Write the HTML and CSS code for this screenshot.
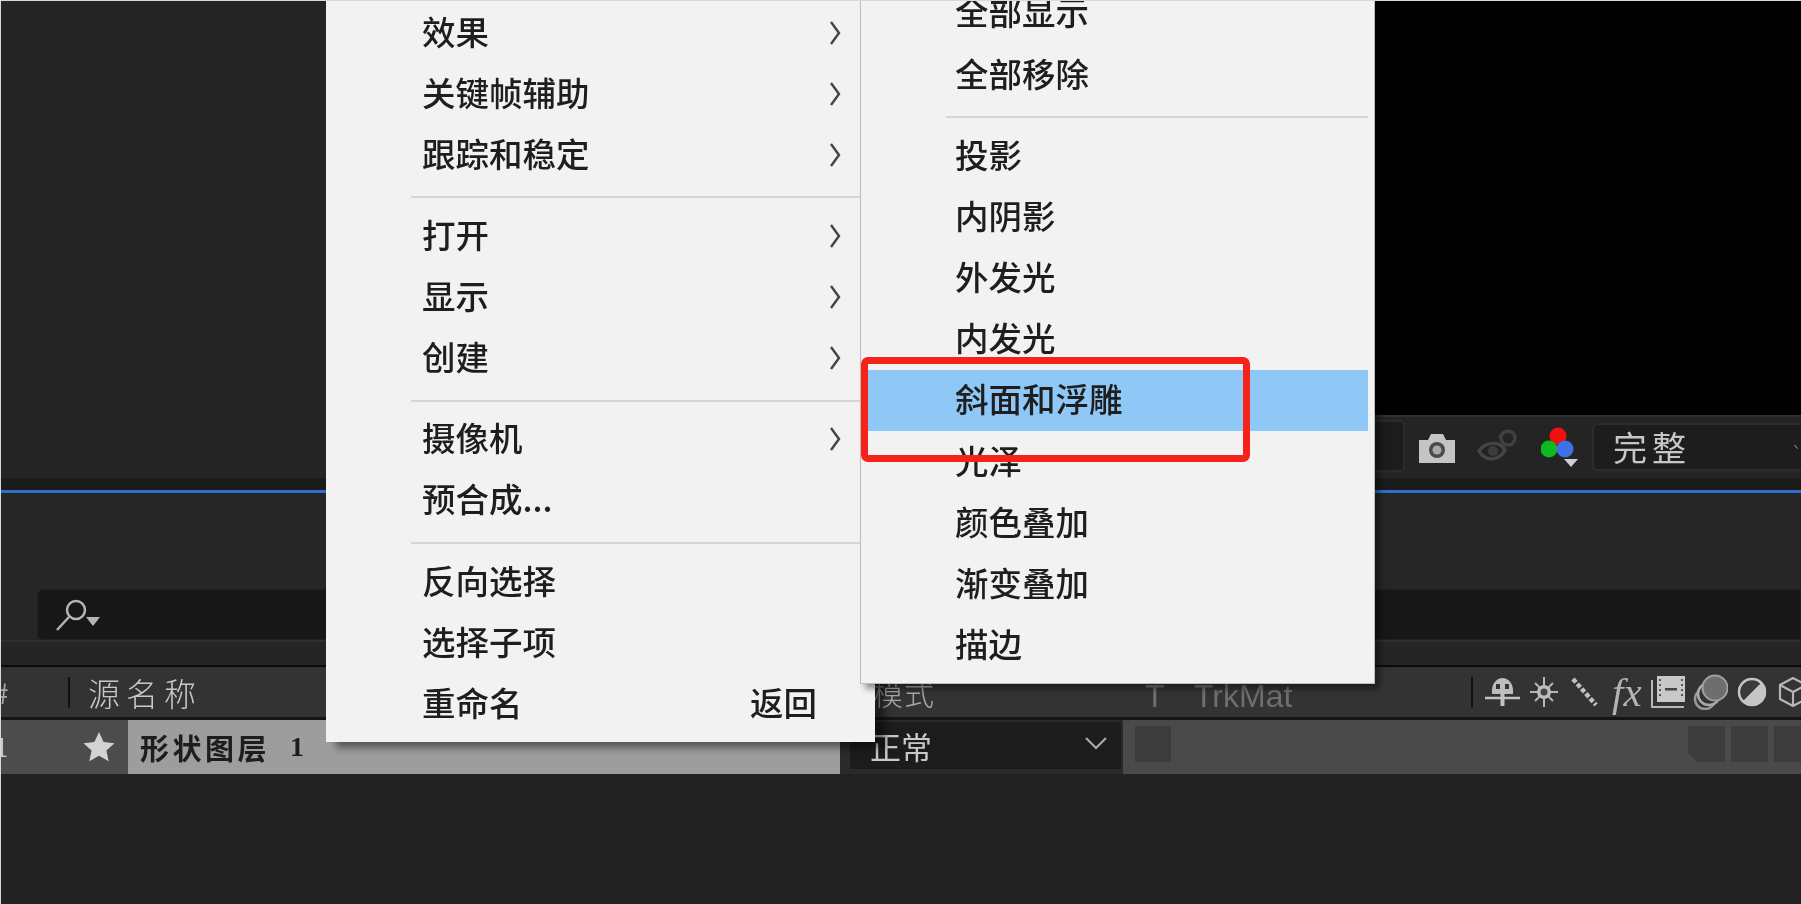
FILE: index.html
```html
<!DOCTYPE html>
<html lang="zh-CN">
<head>
<meta charset="utf-8">
<title>图层样式菜单</title>
<link rel="stylesheet" href="styles.css">
</head>
<body>
<div class="app">
  <section class="preview"><div class="preview-side"></div><div class="preview-black"></div></section>

  <section class="toolbar">
    <div class="tool-left"></div>
    <div class="tool-right">
      <div class="tool-input"></div>
      <svg class="ico cam" viewBox="0 0 40 32"><path d="M2 8h9l3-6h12l3 6h9v23H2z" fill="#c4c4c4"/><circle cx="20" cy="18" r="8" fill="#4a4a4a"/><circle cx="20" cy="18" r="4.5" fill="#a8a8a8"/></svg>
      <svg class="ico eye" viewBox="0 0 42 34"><path d="M2 22c6-9 20-11 26-1-6 11-20 12-26 1z" fill="none" stroke="#454545" stroke-width="3.5"/><circle cx="16" cy="22" r="5" fill="#3d3d3d"/><circle cx="31" cy="9" r="7" fill="none" stroke="#404040" stroke-width="3.5"/><path d="M22 9l4-5" stroke="#404040" stroke-width="3"/></svg>
      <svg class="ico rgb" viewBox="0 0 40 40"><circle cx="17" cy="9" r="8.5" fill="#f01010"/><circle cx="8" cy="22" r="8.5" fill="#10b820"/><circle cx="24" cy="22" r="8.5" fill="#3f70ea"/><path d="M23 32h14l-7 8z" fill="#cfcfcf"/></svg>
      <div class="tool-select"><span class="tool-label">完整</span><svg class="tool-chev" viewBox="0 0 14 10"><path d="M1 1l6 7" fill="none" stroke="#aaa" stroke-width="2"/></svg></div>
    </div>
  </section>
  <div class="band"></div>
  <div class="blue"></div>
  <div class="panel-gap"></div>
  <section class="search-row">
    <div class="search-box">
      <svg class="search-ico" viewBox="0 0 50 34"><circle cx="22" cy="11" r="9" fill="none" stroke="#b5b5b5" stroke-width="2.5"/><path d="M15 18L3 31" stroke="#b5b5b5" stroke-width="2.5"/><path d="M32 18h14l-7 9z" fill="#b5b5b5"/></svg>
    </div>
  </section>
  <div class="panel-low"></div>
  <div class="black-line"></div>

  <section class="layer-head">
    <span class="col-hash">#</span>
    <span class="col-div"><i class="vline"></i></span>
    <span class="col-name">源名称</span>
    <span class="col-mode">模式</span>
    <span class="col-t">T</span>
    <span class="col-trk">TrkMat</span>
    <span class="col-div2"><i class="vline"></i></span>
    <div class="switches">
      <svg class="sw s-shy" viewBox="0 0 35 30"><path d="M7 17C6 6 12 1 17.5 1S29 6 28 17z" fill="#bdbdbd"/><rect x="11" y="7" width="4" height="5" fill="#333"/><rect x="20" y="7" width="4" height="5" fill="#333"/><path d="M0 21h35" stroke="#c2c2c2" stroke-width="2.5"/><path d="M17.5 14v15" stroke="#c2c2c2" stroke-width="4"/></svg>
      <svg class="sw s-sun" viewBox="0 0 28 30"><path d="M14 0v30M0 15h28M5 6l18 18M23 6L5 24" stroke="#b5b5b5" stroke-width="2"/><circle cx="14" cy="15" r="7" fill="#bdbdbd"/><circle cx="14" cy="15" r="3.5" fill="#444"/></svg>
      <svg class="sw s-line" viewBox="0 0 28 30"><path d="M3 2L26 28" stroke="#c0c0c0" stroke-width="4.5" stroke-dasharray="4.5 2"/></svg>
      <span class="s-fx">fx</span>
      <svg class="sw s-film" viewBox="0 0 34 32"><path d="M1 4v27h32" fill="none" stroke="#b8b8b8" stroke-width="2"/><rect x="6" y="0" width="28" height="26" fill="#c8c8c8"/><path d="M9 3v20M31 3v20" stroke="#555" stroke-width="2" stroke-dasharray="2 3"/><rect x="14" y="12" width="12" height="2.5" fill="#444"/></svg>
      <svg class="sw s-mb" viewBox="0 0 35 36"><circle cx="12" cy="25" r="10" fill="none" stroke="#999" stroke-width="2.5"/><circle cx="16" cy="20" r="11" fill="#333" stroke="#aaa" stroke-width="2.5"/><circle cx="22" cy="14" r="12.5" fill="#6e6e6e" stroke="#a0a0a0" stroke-width="2"/></svg>
      <svg class="sw s-half" viewBox="0 0 30 30"><circle cx="15" cy="15" r="14" fill="#c5c5c5"/><path d="M5 25A14 14 0 0 1 25 5z" fill="#3a3a3a"/><circle cx="15" cy="15" r="13" fill="none" stroke="#c5c5c5" stroke-width="2.5"/></svg>
      <svg class="sw s-cube" viewBox="0 0 30 30"><path d="M15 1l13 7v14l-13 7-13-7V8zM2 8l13 7 13-7M15 15v14" fill="none" stroke="#b5b5b5" stroke-width="2.2"/></svg>
    </div>
  </section>
  <div class="dark-line"></div>

  <section class="layer-row">
    <div class="row-idx"><span class="idx">1</span><svg class="star" viewBox="0 0 32 32"><path d="M16 1l4.6 10 10.9 1.2-8.1 7.3 2.3 10.7L16 24.7 6.3 30.2l2.3-10.7L.5 12.2 11.4 11z" fill="#d2d2d2"/></svg></div>
    <div class="row-name">形状图层<span class="row-num">1</span></div>
    <div class="row-gap"></div>
    <div class="row-mode"><span>正常</span><svg class="mode-chev" viewBox="0 0 24 14"><path d="M2 2l10 10L22 2" fill="none" stroke="#aaa" stroke-width="2.2"/></svg></div>
    <div class="row-rest">
      <i class="cell cell-first"></i>
      <i class="cell cell-a"></i>
      <i class="cell"></i>
      <i class="cell cell-end"></i>
    </div>
  </section>
  <div class="bottom"></div>

  <nav class="menu menu-main">
    <div class="mi"><span class="mt">效果</span><svg class="chev" viewBox="0 0 12 24"><path d="M2 1l8 11L2 23" fill="none" stroke="#444" stroke-width="2.4"/></svg></div>
    <div class="mi"><span class="mt">关键帧辅助</span><svg class="chev" viewBox="0 0 12 24"><path d="M2 1l8 11L2 23" fill="none" stroke="#444" stroke-width="2.4"/></svg></div>
    <div class="mi"><span class="mt">跟踪和稳定</span><svg class="chev" viewBox="0 0 12 24"><path d="M2 1l8 11L2 23" fill="none" stroke="#444" stroke-width="2.4"/></svg></div>
    <div class="sep"></div>
    <div class="mi"><span class="mt">打开</span><svg class="chev" viewBox="0 0 12 24"><path d="M2 1l8 11L2 23" fill="none" stroke="#444" stroke-width="2.4"/></svg></div>
    <div class="mi"><span class="mt">显示</span><svg class="chev" viewBox="0 0 12 24"><path d="M2 1l8 11L2 23" fill="none" stroke="#444" stroke-width="2.4"/></svg></div>
    <div class="mi"><span class="mt">创建</span><svg class="chev" viewBox="0 0 12 24"><path d="M2 1l8 11L2 23" fill="none" stroke="#444" stroke-width="2.4"/></svg></div>
    <div class="sep"></div>
    <div class="mi"><span class="mt">摄像机</span><svg class="chev" viewBox="0 0 12 24"><path d="M2 1l8 11L2 23" fill="none" stroke="#444" stroke-width="2.4"/></svg></div>
    <div class="mi"><span class="mt">预合成...</span></div>
    <div class="sep"></div>
    <div class="mi"><span class="mt">反向选择</span></div>
    <div class="mi"><span class="mt">选择子项</span></div>
    <div class="mi"><span class="mt">重命名</span><span class="mt shortcut">返回</span></div>
  </nav>

  <nav class="menu menu-sub">
    <div class="si">全部显示</div>
    <div class="si">全部移除</div>
    <div class="sep sep-sub"></div>
    <div class="si">投影</div>
    <div class="si">内阴影</div>
    <div class="si">外发光</div>
    <div class="si">内发光</div>
    <div class="si si-on">斜面和浮雕</div>
    <div class="si">光泽</div>
    <div class="si">颜色叠加</div>
    <div class="si">渐变叠加</div>
    <div class="si">描边</div>
  </nav>

  <div class="redbox"></div>
</div>
</body>
</html>
```
FILE: styles.css
```css
* { box-sizing: border-box; }
html, body { margin: 0; padding: 0; height: 100%; background: #232323; overflow: hidden; }
body { font-family: "Noto Sans CJK SC", "Noto Sans", sans-serif; }

.app {
  position: relative;
  width: 1801px;
  height: 904px;
  overflow: hidden;
  display: flex;
  flex-direction: column;
  background: #232323;
  border-left: 1px solid #d8d8d8;
  border-top: 1px solid #d8d8d8;
  filter: blur(0.6px);
}

/* preview */
.preview { display: flex; height: 414px; flex: none; }
.preview-side { width: 1374px; background: #252525; }
.preview-black { flex: 1; background: #000; }

/* viewer toolbar */
.toolbar { height: 63px; flex: none; display: flex; background: #252525; }
.tool-left { width: 1374px; flex: none; }
.tool-right {
  flex: 1;
  display: flex;
  align-items: flex-start;
  background: #242424;
  border-top: 2px solid #2f2f2f;
}
.tool-input { width: 30px; height: 52px; margin-top: 3px; background: #1c1c1c; border: 2px solid #2b2b2b; border-left: 0; border-radius: 0 5px 5px 0; }
.ico { display: block; flex: none; }
.cam { width: 40px; height: 32px; margin: 15px 0 0 12px; }
.eye { width: 42px; height: 34px; margin: 12px 0 0 20px; }
.rgb { width: 40px; height: 40px; margin: 10px 0 0 22px; }
.tool-select {
  flex: 1;
  height: 48px;
  margin: 6px 0 0 11px;
  padding-left: 19px;
  display: flex;
  align-items: center;
  justify-content: space-between;
  background: #1d1d1d;
  border: 2px solid #2c2c2c;
  border-right: 0;
  border-radius: 6px 0 0 6px;
}
.tool-label { font-size: 34px; line-height: 44px; letter-spacing: 5px; color: #c6c6c6; font-weight: 400; }
.tool-chev { width: 7px; height: 10px; }

.band { height: 12px; flex: none; background: #1b1b1b; }
.blue { height: 3px; flex: none; background: #2b70c9; }
.panel-gap { height: 96px; flex: none; background: #262626; }

.search-row { height: 51px; flex: none; padding-left: 36px; background: #262626; }
.search-box { height: 51px; padding: 9px 0 0 16px; background: #171717; border-radius: 6px 0 0 6px; border: 1px solid #202020; }
.search-ico { display: block; width: 50px; height: 34px; }

.panel-low { height: 25px; flex: none; background: #252525; border-top: 2px solid #2f2f2f; }
.black-line { height: 2px; flex: none; background: #0b0b0b; }

/* layer header */
.layer-head {
  height: 50px;
  flex: none;
  display: grid;
  grid-template-columns: 67px 20px 785px 272px 49px 277px 14px 1fr;
  align-items: center;
  background: #333;
  color: #bdbdbd;
  overflow: hidden;
}
.col-hash { margin-left: -8px; font-size: 28px; color: #a8a8a8; }
.col-div, .col-div2 { display: flex; align-items: center; height: 100%; }
.vline { display: block; width: 2px; height: 31px; background: #111; }
.col-name { font-size: 32px; letter-spacing: 6px; line-height: 40px; font-weight: 300; color: #c8c8c8; }
.col-mode { font-size: 30px; letter-spacing: 1px; line-height: 40px; font-weight: 300; color: #a8a8a8; }
.col-t, .col-trk { font-family: "Liberation Sans", sans-serif; font-size: 32px; color: #6e6e6e; margin-top: 8px; }
.switches { display: flex; align-items: center; height: 100%; }
.sw { display: block; flex: none; }
.s-shy { width: 35px; height: 30px; }
.s-sun { width: 28px; height: 30px; margin-left: 10px; }
.s-line { width: 28px; height: 30px; margin-left: 12px; }
.s-fx { width: 30px; margin-left: 14px; font-family: "Liberation Serif", serif; font-style: italic; font-size: 41px; line-height: 40px; color: #b4b4b4; }
.s-film { width: 34px; height: 32px; margin-left: 9px; }
.s-mb { width: 35px; height: 36px; margin-left: 8px; }
.s-half { width: 30px; height: 30px; margin-left: 9px; }
.s-cube { width: 30px; height: 30px; margin-left: 11px; flex: none; }

.dark-line { height: 3px; flex: none; background: #141414; }

/* layer row */
.layer-row {
  height: 54px;
  flex: none;
  display: grid;
  grid-template-columns: 127px 712px 10px 271px 1fr;
  background: #2a2a2a;
}
.row-idx { display: flex; align-items: center; justify-content: space-between; padding-right: 13px; background: #4c4c4c; overflow: hidden; }
.idx { margin-left: -8px; font-family: "Liberation Serif", serif; font-weight: 700; font-size: 30px; color: #c8c8c8; }
.star { width: 32px; height: 32px; }
.row-name {
  display: flex;
  align-items: center;
  padding-left: 12px;
  background: #9d9d9d;
  color: #1d1d1d;
  font-size: 29px;
  font-weight: 700;
  letter-spacing: 3.5px;
}
.row-num { margin-left: 20px; font-family: "Liberation Serif", serif; font-size: 28px; }
.row-mode {
  margin: 2px 0 5px;
  display: flex;
  align-items: center;
  justify-content: space-between;
  padding: 0 13px 0 20px;
  background: #1c1c1c;
  color: #c8c8c8;
  font-size: 31px;
  font-weight: 400;
}
.mode-chev { width: 24px; height: 14px; margin-top: -6px; }
.row-rest {
  margin-left: 2px;
  display: flex;
  padding: 6px 0 12px 12px;
  background: #4a4a4a;
}
.cell { display: block; width: 37px; margin-left: 6px; background: #3c3c3c; flex: none; }
.cell-first { margin-left: 0; width: 36px; margin-right: 517px; }
.cell-a { margin-left: 0; clip-path: polygon(0 0, 100% 0, 100% 100%, 25% 100%, 0 75%); }
.cell-end { width: 31px; }

.bottom { flex: 1; background: #222; }

/* context menus */
.menu {
  position: absolute;
  background: #f2f2f2;
  color: #1e1e1e;
  font-size: 33.5px;
  font-weight: 500;
}
.menu-main {
  left: 325px;
  top: -1px;
  width: 549px;
  height: 742px;
  padding: 2px 0 0 96px;
  box-shadow: 10px 6px 7px rgba(0,0,0,.45);
}
.menu-sub {
  left: 859px;
  top: -19px;
  width: 515px;
  height: 702px;
  padding-top: 1px;
  border: 1px solid #bdbdbd;
  border-top: 0;
  box-shadow: 5px 5px 6px rgba(0,0,0,.4);
}
.mi {
  height: 61.1px;
  display: flex;
  align-items: center;
  justify-content: space-between;
  padding: 0 34px 0 0;
  line-height: 1;
}
.mt { margin-bottom: 4px; }
.chev { width: 12px; height: 24px; flex: none; }
.shortcut { margin-right: 24px; }
.sep { height: 20px; margin: 0 13px 0 -11px; padding-top: 11px; }
.sep::before { content: ""; display: block; height: 2px; background: #d6d6d6; }
.menu-main .sep { margin-right: 14px; }
.si {
  height: 61.2px;
  display: flex;
  align-items: center;
  margin: 0 6px;
  padding: 0 0 5px 88px;
  line-height: 1;
}
.si-on { background: #8fc8f7; }
.sep-sub { margin: 0 6px 0 85px; }

.redbox {
  position: absolute;
  left: 860px;
  top: 356px;
  width: 389px;
  height: 105px;
  border: 7px solid #f6231a;
  border-radius: 7px;
}
```
